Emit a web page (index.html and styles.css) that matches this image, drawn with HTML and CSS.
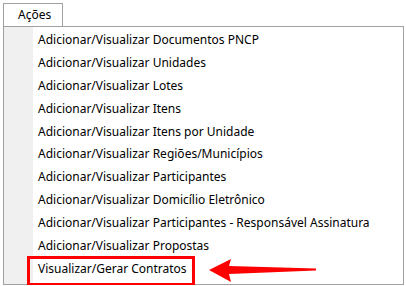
FILE: index.html
```html
<!DOCTYPE html>
<html lang="pt">
<head>
    <meta charset="UTF-8">
    <title>Ações</title>
    <link rel="stylesheet" href="styles.css">
</head>
<body>
    <div class="tab">Ações</div>
    <ul class="menu">
        <li>Adicionar/Visualizar Documentos PNCP</li>
        <li>Adicionar/Visualizar Unidades</li>
        <li>Adicionar/Visualizar Lotes</li>
        <li>Adicionar/Visualizar Itens</li>
        <li>Adicionar/Visualizar Itens por Unidade</li>
        <li>Adicionar/Visualizar Regiões/Municípios</li>
        <li>Adicionar/Visualizar Participantes</li>
        <li>Adicionar/Visualizar Domicílio Eletrônico</li>
        <li>Adicionar/Visualizar Participantes - Responsável Assinatura</li>
        <li>Adicionar/Visualizar Propostas</li>
        <li class="marked">Visualizar/Gerar Contratos
            <svg class="arrow" width="110" height="26" viewBox="0 0 110 26">
                <path d="M0 12 L22 1 L20 8 L107 10.5 L107 12.5 L20 16 L22 24 Z" fill="#ff0000"/>
            </svg>
        </li>
    </ul>
</body>
</html>
```

FILE: styles.css
```css
body {
    margin: 0;
    padding: 3px 0 0 3px;
    background-color: #fff;
    font-family: "Noto Sans", "Open Sans", sans-serif;
    font-size: 12px;
    color: #000;
}
.tab {
    display: inline-block;
    height: 22px;
    line-height: 21px;
    padding: 0 12px 0 14px;
    border: 1px solid #a0a0a0;
    border-bottom: none;
    width: 32px;
}
.menu {
    list-style: none;
    margin: 0;
    padding: 2px 0 0 0;
    width: 399px;
    height: 255px;
    border: 1px solid #a0a0a0;
    background: linear-gradient(to right, #f0f0f0 29px, #fff 29px);
}
.menu li {
    height: 22.9px;
    line-height: 22px;
    padding-left: 34px;
    white-space: nowrap;
}
.marked {
    position: relative;
}
.marked::before {
    content: "";
    position: absolute;
    left: 23px;
    top: -2px;
    width: 162px;
    height: 24px;
    border: 3px solid #ff0000;
}
.arrow {
    position: absolute;
    left: 205px;
    top: 0;
}
```
